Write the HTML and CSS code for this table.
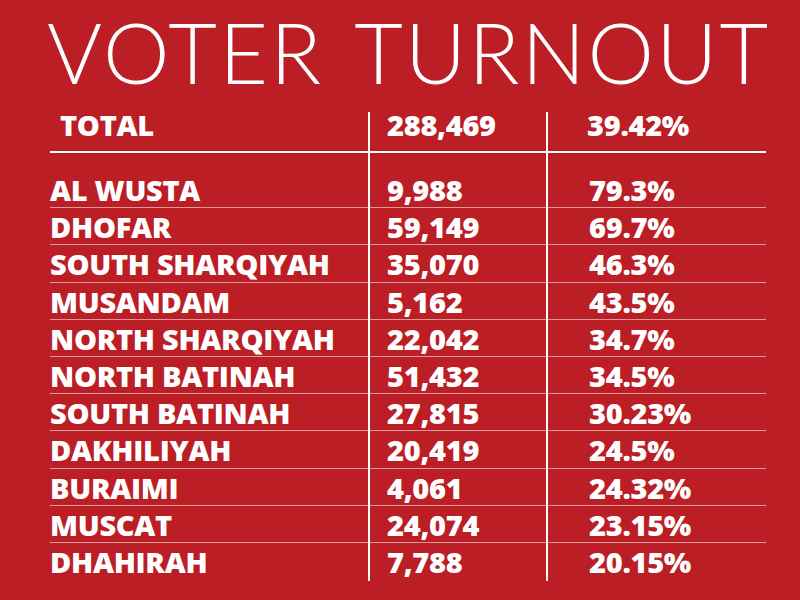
FILE: index.html
```html
<!DOCTYPE html>
<html lang="en">
<head>
<meta charset="utf-8">
<title>Voter Turnout</title>
<link rel="stylesheet" href="styles.css">
</head>
<body>
<main class="page">
  <h1 class="title">VOTER TURNOUT</h1>
  <div class="table">
    <div class="row total">
      <div class="cell name">TOTAL</div>
      <div class="cell num">288,469</div>
      <div class="cell pct">39.42%</div>
    </div>
    <div class="row spacer">
      <div class="cell name"></div>
      <div class="cell num"></div>
      <div class="cell pct"></div>
    </div>
    <div class="row"><div class="cell name">AL WUSTA</div><div class="cell num">9,988</div><div class="cell pct">79.3%</div></div>
    <div class="row"><div class="cell name">DHOFAR</div><div class="cell num">59,149</div><div class="cell pct">69.7%</div></div>
    <div class="row"><div class="cell name">SOUTH SHARQIYAH</div><div class="cell num">35,070</div><div class="cell pct">46.3%</div></div>
    <div class="row"><div class="cell name">MUSANDAM</div><div class="cell num">5,162</div><div class="cell pct">43.5%</div></div>
    <div class="row"><div class="cell name">NORTH SHARQIYAH</div><div class="cell num">22,042</div><div class="cell pct">34.7%</div></div>
    <div class="row"><div class="cell name">NORTH BATINAH</div><div class="cell num">51,432</div><div class="cell pct">34.5%</div></div>
    <div class="row"><div class="cell name">SOUTH BATINAH</div><div class="cell num">27,815</div><div class="cell pct">30.23%</div></div>
    <div class="row"><div class="cell name">DAKHILIYAH</div><div class="cell num">20,419</div><div class="cell pct">24.5%</div></div>
    <div class="row"><div class="cell name">BURAIMI</div><div class="cell num">4,061</div><div class="cell pct">24.32%</div></div>
    <div class="row"><div class="cell name">MUSCAT</div><div class="cell num">24,074</div><div class="cell pct">23.15%</div></div>
    <div class="row last"><div class="cell name">DHAHIRAH</div><div class="cell num">7,788</div><div class="cell pct">20.15%</div></div>
  </div>
</main>
</body>
</html>
```

FILE: styles.css
```css
html, body {
  margin: 0;
  padding: 0;
  background: #bb1e24;
}

.page {
  width: 800px;
  height: 600px;
  background: #bb1e24;
  color: #ffffff;
  font-family: "Open Sans", "Liberation Sans", sans-serif;
  padding: 0 34px 0 50px;
  box-sizing: border-box;
  overflow: hidden;
}

.title {
  margin: 0 -34px 0 -3px;
  padding-top: 2px;
  height: 112px;
  box-sizing: border-box;
  font-family: "Lato", "Open Sans", sans-serif;
  font-weight: 300;
  font-size: 84px;
  line-height: 100px;
  letter-spacing: 2.3px;
  word-spacing: 8px;
  white-space: nowrap;
}

.table {
  display: flex;
  flex-direction: column;
  width: 716px;
}

.row {
  display: grid;
  grid-template-columns: 318px 178px 220px;
  height: 37.2px;
  box-sizing: border-box;
  border-bottom: 1px solid rgba(255, 255, 255, 0.55);
  font-weight: 800;
  font-size: 29px;
  line-height: 38px;
  letter-spacing: -0.3px;
}

.row.last {
  border-bottom: none;
  height: 34px;
}

.row.total {
  height: 41px;
  border-bottom: 2px solid #ffffff;
  line-height: 25px;
}

.row.spacer {
  height: 18px;
  border-bottom: none;
}

.cell {
  white-space: nowrap;
}

.cell.num {
  border-left: 2px solid #ffffff;
  padding-left: 17px;
}

.cell.pct {
  border-left: 2px solid #ffffff;
  padding-left: 41px;
}

.total .cell.name {
  padding-left: 10px;
}

.total .cell.pct {
  padding-left: 39px;
}
```
